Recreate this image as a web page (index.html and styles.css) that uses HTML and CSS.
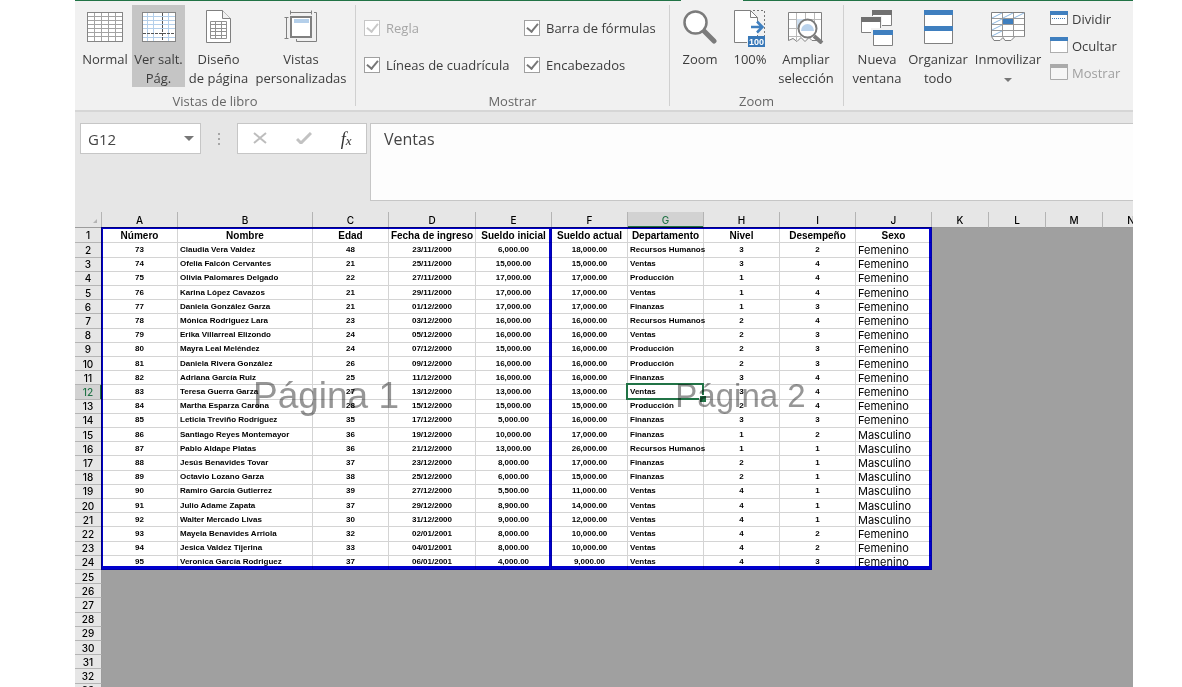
FILE: index.html
```html
<!DOCTYPE html>
<html lang="es">
<head>
  <meta charset="UTF-8" />
  <meta name="viewport" content="width=device-width, initial-scale=1.0"/>
  <title>Hoja de empleados</title>
  <link rel="stylesheet" href="styles.css">
</head>
<body>

<div class="app">
  <div class="tab-line"><span></span><span class="tab-gap"></span><span></span></div>

  <header class="ribbon">
    <section class="group">
      <div class="tools tools-views">
        <button class="tool w-normal">
          <svg width="36" height="32" viewBox="0 0 36 32">
            <rect x="0.5" y="1.5" width="35" height="29" fill="#fff" stroke="#858585"/>
            <path d="M7.5 2v28M14.5 2v28M21.5 2v28M28.5 2v28M1 5.5h34M1 9.5h34M1 13.5h34M1 17.5h34M1 21.5h34M1 25.5h34" stroke="#a3a3a3" fill="none"/>
          </svg>
          <span>Normal</span>
        </button>
        <button class="tool w-break active">
          <svg width="34" height="32" viewBox="0 0 34 32">
            <rect x="0.5" y="1.5" width="33" height="29" fill="#fff" stroke="#858585"/>
            <path d="M5.5 2v28M11.5 2v28M26.5 2v28M1 5.5h32M1 9.5h32M1 13.5h32M1 17.5h32M1 26.5h32" stroke="#b4cfea" fill="none"/>
            <path d="M20.5 2v28M1 22.5h32" stroke="#555" stroke-dasharray="3 1" fill="none"/>
          </svg>
          <span>Ver salt.<br>Pág.</span>
        </button>
        <button class="tool w-design">
          <svg width="26" height="34" viewBox="0 0 26 34">
            <path d="M.5.5h16l8 8v24H.5z" fill="#fff" stroke="#808080"/>
            <path d="M16.5.5v8h8" fill="#f1f1f1" stroke="#808080"/>
            <path d="M4.5 11.5h16v17h-16zM4.5 14.500h16M4.5 18.5h16M4.5 21.5h16M4.5 25.5h16M9.5 11.5v17M15.5 11.5v17" fill="none" stroke="#919191"/>
          </svg>
          <span>Diseño<br>de página</span>
        </button>
        <button class="tool w-custom">
          <svg width="34" height="34" viewBox="0 0 34 34">
            <path d="M6.5.5v4M27.5.5v4M7 2.5h20M.5 7.5h4M.5 28.5h4M2.5 8v20" stroke="#808080" fill="none"/>
            <path d="M30 2.5h2.5v29h-20V29" stroke="#808080" fill="none"/>
            <rect x="7" y="7" width="20" height="20" fill="#fff" stroke="#808080" stroke-width="2"/>
            <rect x="10" y="9" width="15" height="4" fill="#b4cfea"/>
          </svg>
          <span>Vistas<br>personalizadas</span>
        </button>
      </div>
      <p class="group-name">Vistas de libro</p>
    </section>

    <section class="group">
      <div class="checks">
        <label class="off"><input type="checkbox" checked disabled>Regla</label>
        <label><input type="checkbox" checked>Barra de fórmulas</label>
        <label><input type="checkbox" checked>Líneas de cuadrícula</label>
        <label><input type="checkbox" checked>Encabezados</label>
      </div>
      <p class="group-name">Mostrar</p>
    </section>

    <section class="group">
      <div class="tools tools-zoom">
        <button class="tool w-zoom">
          <svg width="34" height="34" viewBox="0 0 34 34">
            <path d="M21 21l10 10" stroke="#7b7b7b" stroke-width="5" stroke-linecap="round"/>
            <circle cx="12.5" cy="12.5" r="11" fill="#fff" stroke="#7b7b7b" stroke-width="2.5"/>
          </svg>
          <span>Zoom</span>
        </button>
        <button class="tool w-zoom">
          <svg width="32" height="38" viewBox="0 0 32 38">
            <path d="M13 32.5H.5V.5h16l7 7V26H14z" fill="#fff"/>
            <path d="M13 32.5H.5V.5h16l7 7v5M16.5.5v7h7" fill="none" stroke="#808080"/>
            <path d="M19 .5h11.5V26M23.5 21v5" fill="none" stroke="#777" stroke-dasharray="2 2"/>
            <path d="M17 17h11M23 11.5l5.500 5.500-5.500 5.500" stroke="#3f7fbf" stroke-width="2.5" fill="none"/>
            <rect x="14" y="26" width="17" height="11" fill="#3878b8"/>
            <text x="22.5" y="35" text-anchor="middle" class="tiny">100</text>
          </svg>
          <span>100%</span>
        </button>
        <button class="tool w-fit">
          <svg width="36" height="34" viewBox="0 0 36 34">
            <path d="M.5 2.5h33v28H24l-3-3-4 4-4-4-4 4-4-3-4.500 2z" fill="#fff" stroke="#808080"/>
            <path d="M8.500 3v27M17.500 3v7M26.500 3v9M1 9.500h32M1 18.500h10M1 26.500h12" stroke="#b9b9b9" fill="none"/>
            <rect x="9" y="9" width="9" height="9" fill="#cfe0f1"/>
            <path d="M26 26l8 7" stroke="#7b7b7b" stroke-width="4"/>
            <circle cx="19.5" cy="18.5" r="9" fill="#fff" stroke="#7b7b7b" stroke-width="2"/>
            <path d="M13 21a6.500 7 0 0 1 13 0z" fill="#b9d2ec"/>
          </svg>
          <span>Ampliar<br>selección</span>
        </button>
      </div>
      <p class="group-name">Zoom</p>
    </section>

    <section class="group last">
      <div class="tools tools-window">
        <button class="tool w-new">
          <svg width="33" height="38" viewBox="0 0 33 38">
            <path d="M11.5 1.5h19v14h-19z" fill="#fff" stroke="#808080"/><path d="M11 0h20v5H11z" fill="#707070"/>
            <path d="M0 6h21v18H0z" fill="#f1f1f1"/>
            <path d="M.5 8.5h19v14H.5z" fill="#fff" stroke="#808080"/><path d="M0 7h20v5H0z" fill="#707070"/>
            <path d="M10 18h22v19H10z" fill="#f1f1f1"/>
            <path d="M12.5 20.5h19v15h-19z" fill="#fff" stroke="#808080"/><path d="M12 20h20v5H12z" fill="#3f7fbf"/>
          </svg>
          <span>Nueva<br>ventana</span>
        </button>
        <button class="tool w-arrange">
          <svg width="29" height="35" viewBox="0 0 29 35">
            <path d="M.5.5h28v33H.5z" fill="#fff" stroke="#808080"/>
            <path d="M0 0h29v5H0zM0 16h29v5H0z" fill="#3f7fbf"/>
          </svg>
          <span>Organizar<br>todo</span>
        </button>
        <button class="tool w-freeze">
          <svg width="34" height="34" viewBox="0 0 34 34">
            <path d="M.5 2.5h33v24H24l-4 4h-6l-2-3-3 3H3l-2.500-4z" fill="#fff" stroke="#808080"/>
            <path d="M11.5 3v24M22.5 3v24M1 8.500h32M1 14.500h32M1 20.500h32M1 26.500h32" stroke="#999" fill="none"/>
            <path d="M1 8l10-5M12 8l10-5M23 8l10-5M1 14l10-5M1 20l10-5M1 26l10-5" stroke="#8db7e0" fill="none"/>
            <rect x="12" y="9" width="10" height="5" fill="#3f7fbf"/>
          </svg>
          <span>Inmovilizar<br><i class="arrow small"></i></span>
        </button>
        <div class="stack">
          <button>
            <svg width="18" height="15" viewBox="0 0 18 15">
              <path d="M.5.5h17v13H.5z" fill="#fff" stroke="#808080"/><path d="M0 0h18v4H0z" fill="#3f7fbf"/>
              <path d="M2 7.500h14" stroke="#3f7fbf" stroke-dasharray="1 1"/>
            </svg>Dividir
          </button>
          <button>
            <svg width="18" height="17" viewBox="0 0 18 17">
              <path d="M.5.5h17v15H.5z" fill="#fff" stroke="#666" stroke-dasharray="1 1"/><path d="M0 0h18v4H0z" fill="#3f7fbf"/>
            </svg>Ocultar
          </button>
          <button disabled>
            <svg width="18" height="17" viewBox="0 0 18 17">
              <path d="M.5.5h17v15H.5z" fill="#f6f6f6" stroke="#aaa"/><path d="M0 0h18v4H0z" fill="#aaa"/>
            </svg>Mostrar
          </button>
        </div>
      </div>
    </section>
  </header>

  <div class="formula-bar">
    <div class="name-box">
      <input type="text" value="G12" aria-label="Cuadro de nombres">
      <button aria-label="Abrir lista de nombres"><i class="arrow"></i></button>
    </div>
    <div class="dots"><i></i><i></i><i></i></div>
    <div class="fx-box">
      <button aria-label="Cancelar">
        <svg width="14" height="12" viewBox="0 0 14 12"><path d="M1 1l12 10M13 1L1 11" stroke="#bdbdbd" stroke-width="2"/></svg>
      </button>
      <button aria-label="Introducir">
        <svg width="16" height="12" viewBox="0 0 16 12"><path d="M1 7l4 4L15 1" stroke="#c2c2c2" stroke-width="3" fill="none"/></svg>
      </button>
      <button class="fx" aria-label="Insertar función">f<sub>x</sub></button>
    </div>
    <textarea aria-label="Barra de fórmulas">Ventas</textarea>
  </div>

  <main class="sheet">
    <table>
      <colgroup>
        <col class="c-num"><col class="c-std"><col class="c-name"><col class="c-std"><col class="c-date">
        <col class="c-std"><col class="c-std"><col class="c-std"><col class="c-std"><col class="c-std"><col class="c-std">
        <col class="c-out"><col class="c-out"><col class="c-out"><col class="c-out">
      </colgroup>
      <thead>
        <tr>
          <th class="corner"></th>
          <th>A</th><th>B</th><th>C</th><th>D</th><th>E</th><th>F</th><th class="current">G</th>
          <th>H</th><th>I</th><th>J</th><th>K</th><th>L</th><th>M</th><th>N</th>
        </tr>
      </thead>
      <tbody id="filas"></tbody>
    </table>
    <div class="page page-1">Página 1</div>
    <div class="page page-2">Página 2</div>
  </main>
</div>

<script>
  const titulos = ['Número', 'Nombre', 'Edad', 'Fecha de ingreso', 'Sueldo inicial', 'Sueldo actual', 'Departamento', 'Nivel', 'Desempeño', 'Sexo'];

  const empleados = [
    [73, 'Claudia Vera Valdez', 48, '23/11/2000', '6,000.00', '18,000.00', 'Recursos Humanos', 3, 2, 'Femenino'],
    [74, 'Ofelia Falcón Cervantes', 21, '25/11/2000', '15,000.00', '15,000.00', 'Ventas', 3, 4, 'Femenino'],
    [75, 'Olivia Palomares Delgado', 22, '27/11/2000', '17,000.00', '17,000.00', 'Producción', 1, 4, 'Femenino'],
    [76, 'Karina López Cavazos', 21, '29/11/2000', '17,000.00', '17,000.00', 'Ventas', 1, 4, 'Femenino'],
    [77, 'Daniela González Garza', 21, '01/12/2000', '17,000.00', '17,000.00', 'Finanzas', 1, 3, 'Femenino'],
    [78, 'Mónica Rodriguez Lara', 23, '03/12/2000', '16,000.00', '16,000.00', 'Recursos Humanos', 2, 4, 'Femenino'],
    [79, 'Erika Villarreal Elizondo', 24, '05/12/2000', '16,000.00', '16,000.00', 'Ventas', 2, 3, 'Femenino'],
    [80, 'Mayra Leal Meléndez', 24, '07/12/2000', '15,000.00', '16,000.00', 'Producción', 2, 3, 'Femenino'],
    [81, 'Daniela Rivera González', 26, '09/12/2000', '16,000.00', '16,000.00', 'Producción', 2, 3, 'Femenino'],
    [82, 'Adriana García Ruiz', 25, '11/12/2000', '16,000.00', '16,000.00', 'Finanzas', 3, 4, 'Femenino'],
    [83, 'Teresa Guerra Garza', 27, '13/12/2000', '13,000.00', '13,000.00', 'Ventas', 3, 4, 'Femenino'],
    [84, 'Martha Esparza Carona', 28, '15/12/2000', '15,000.00', '15,000.00', 'Producción', 2, 4, 'Femenino'],
    [85, 'Leticia Treviño Rodríguez', 35, '17/12/2000', '5,000.00', '16,000.00', 'Finanzas', 3, 3, 'Femenino'],
    [86, 'Santiago Reyes Montemayor', 36, '19/12/2000', '10,000.00', '17,000.00', 'Finanzas', 1, 2, 'Masculino'],
    [87, 'Pablo Aldape Platas', 36, '21/12/2000', '13,000.00', '26,000.00', 'Recursos Humanos', 1, 1, 'Masculino'],
    [88, 'Jesús Benavides Tovar', 37, '23/12/2000', '8,000.00', '17,000.00', 'Finanzas', 2, 1, 'Masculino'],
    [89, 'Octavio Lozano Garza', 38, '25/12/2000', '6,000.00', '15,000.00', 'Finanzas', 2, 1, 'Masculino'],
    [90, 'Ramiro García Gutierrez', 39, '27/12/2000', '5,500.00', '11,000.00', 'Ventas', 4, 1, 'Masculino'],
    [91, 'Julio Adame Zapata', 37, '29/12/2000', '8,900.00', '14,000.00', 'Ventas', 4, 1, 'Masculino'],
    [92, 'Walter Mercado Livas', 30, '31/12/2000', '9,000.00', '12,000.00', 'Ventas', 4, 1, 'Masculino'],
    [93, 'Mayela Benavides Arriola', 32, '02/01/2001', '8,000.00', '10,000.00', 'Ventas', 4, 2, 'Femenino'],
    [94, 'Jesica Valdez Tijerina', 33, '04/01/2001', '8,000.00', '10,000.00', 'Ventas', 4, 2, 'Femenino'],
    [95, 'Veronica García Rodriguez', 37, '06/01/2001', '4,000.00', '9,000.00', 'Ventas', 4, 3, 'Femenino']
  ];

  const filas = document.getElementById('filas');
  const clases = { 1: 'left', 6: 'left', 9: 'sex' };

  for (let n = 1; n <= 33; n++) {
    const datos = n === 1 ? titulos : empleados[n - 2];
    let html = `<th class="${n === 12 ? 'current' : ''}">${n}</th>`;
    if (datos) {
      datos.forEach((valor, i) => {
        const clase = n === 1 ? 'title' : (clases[i] || '');
        const activa = n === 12 && i === 6 ? ' selected' : '';
        html += `<td class="cell ${clase}${activa}">${valor}</td>`;
      });
      html += '<td colspan="4"></td>';
    } else {
      html += '<td colspan="14"></td>';
    }
    filas.insertAdjacentHTML('beforeend', `<tr>${html}</tr>`);
  }
</script>

</body>
</html>
```
FILE: styles.css
```css
* { box-sizing: border-box; }

body {
  margin: 0;
  background: #fff;
  font-family: 'Open Sans', 'Noto Sans', sans-serif;
  font-size: 13px;
  color: #3c3c3c;
}

button {
  font: inherit;
  color: inherit;
  background: none;
  border: 0;
  padding: 0;
}

.app {
  display: flex;
  flex-direction: column;
  height: 100vh;
  margin: 0 49px 0 75px;
  overflow: hidden;
  background: #e6e6e6;
}

/* Ribbon */
.tab-line {
  display: grid;
  grid-template-columns: 606px 62px 1fr;
  height: 1px;
  flex-shrink: 0;
}

.tab-line span { background: #217346; }
.tab-line .tab-gap { background: #f1f1f1; }

.ribbon {
  display: grid;
  grid-template-columns: 281px 314px 174px 1fr;
  height: 111px;
  flex-shrink: 0;
  padding: 4px 0;
  background: #f1f1f1;
  border-bottom: 2px solid #d6d6d6;
}

.group {
  display: flex;
  flex-direction: column;
  border-right: 1px solid #d0d0d0;
}

.group.last { border: 0; }

.group-name {
  margin: auto 0 0;
  height: 14px;
  line-height: 18px;
  text-align: center;
  color: #666;
}

.group-name, .tools, .checks { flex-shrink: 0; }

.tools { display: flex; }
.tools-views { padding-left: 3px; }
.tools-zoom { padding-left: 5px; }
.tools-window { padding-left: 3px; }

.tool {
  display: flex;
  flex-direction: column;
  align-items: center;
  flex-shrink: 0;
  height: 82px;
  padding-top: 5px;
  line-height: 19px;
  white-space: nowrap;
}

.tool svg { flex-shrink: 0; }
.tool span { margin-top: auto; height: 37px; }
.tool.active { background: #c5c5c5; }

.w-normal { width: 54px; }
.w-break { width: 53px; }
.w-normal, .w-break { padding-top: 6px; }
.w-design { width: 67px; }
.w-custom { width: 98px; }
.w-zoom { width: 50px; }
.w-fit { width: 62px; }
.w-new { width: 60px; }
.w-arrange { width: 62px; }
.w-freeze { width: 78px; }

.tiny {
  font: bold 9px 'Liberation Sans', sans-serif;
  fill: #fff;
}

.arrow {
  display: inline-block;
  border: 5px solid transparent;
  border-top-color: #777;
  border-bottom: 0;
}

.arrow.small {
  border-width: 4px 4px 0;
  vertical-align: middle;
}

.stack {
  display: flex;
  flex-direction: column;
  padding-left: 3px;
}

.stack button {
  display: flex;
  align-items: center;
  gap: 4px;
  height: 27px;
}

.stack button:disabled { color: #a0a0a0; }

.checks {
  display: grid;
  grid-template-columns: 160px 1fr;
  grid-auto-rows: 37px;
  padding: 4px 0 0 8px;
}

.checks label {
  display: flex;
  align-items: center;
  gap: 6px;
  white-space: nowrap;
}

.checks .off { color: #a6a6a6; }

.checks input {
  appearance: none;
  display: grid;
  place-items: center;
  width: 16px;
  height: 16px;
  margin: 0;
  background: #fff;
  border: 1px solid #a0a0a0;
}

.checks input:checked::after {
  content: "";
  width: 5px;
  height: 9px;
  margin-bottom: 3px;
  border: solid #777;
  border-width: 0 2px 2px 0;
  transform: rotate(40deg);
}

.checks input:disabled { border-color: #c6c6c6; }
.checks input:disabled::after { border-color: #c8c8c8; }

/* Formula bar */
.formula-bar {
  display: grid;
  grid-template-columns: 121px 36px 130px 1fr;
  align-items: start;
  flex-shrink: 0;
  height: 100px;
  padding: 11px 0 10px 5px;
}

.name-box, .fx-box {
  display: flex;
  align-items: center;
  height: 31px;
  background: #fff;
  border: 1px solid #c6c6c6;
}

.name-box input {
  flex: 1;
  min-width: 0;
  padding: 0 0 0 7px;
  border: 0;
  font: inherit;
  font-size: 15px;
  color: #444;
}

.name-box button { padding: 0 6px; }
.name-box .arrow { display: block; }

.dots {
  display: flex;
  flex-direction: column;
  align-items: center;
  justify-content: center;
  gap: 3px;
  height: 31px;
}

.dots i {
  width: 2px;
  height: 2px;
  background: #a6a6a6;
}

.fx-box { justify-content: space-around; }

.fx-box .fx {
  font: italic 18px/20px 'Liberation Serif', serif;
  color: #333;
}

.fx sub { font-size: 13px; line-height: 0; vertical-align: 0; }

.formula-bar textarea {
  display: block;
  height: 78px;
  margin-left: 3px;
  padding: 4px 13px;
  border: 1px solid #c6c6c6;
  border-right: 0;
  background: #fdfdfd;
  font: inherit;
  font-size: 16px;
  line-height: 22px;
  color: #444;
  resize: none;
}

/* Sheet */
.sheet {
  position: relative;
  flex: 1;
  overflow: hidden;
  background: #a0a0a0;
}

table {
  table-layout: fixed;
  width: 1085px;
  height: 486px;
  border-spacing: 0;
  font-family: 'Liberation Sans', Arial, sans-serif;
  color: #000;
}

.c-num { width: 27px; }
.c-std { width: 76px; }
.c-name { width: 135px; }
.c-date { width: 87px; }
.c-out { width: 57px; }

th {
  padding: 0;
  background: #e6e6e6;
  font-family: Inter, 'Liberation Sans', sans-serif;
  font-size: 10px;
  font-weight: 500;
  line-height: 12px;
}

thead th {
  height: 16px;
  border-right: 1px solid #b4b4b4;
  border-bottom: 1px solid #9c9c9c;
}

tbody th {
  border-right: 1px solid #9c9c9c;
  border-bottom: 1px solid #b4b4b4;
}

.corner { padding: 5px 4px 2px 0; }

.corner::after {
  content: "";
  display: block;
  width: 0;
  margin-left: auto;
  border: 2px solid #b4b4b4;
  border-top-color: transparent;
  border-left-color: transparent;
}

.current { background: #d2d2d2; color: #217346; }
thead .current { box-shadow: inset 0 -1px #217346; border-bottom-color: #217346; }
tbody .current { box-shadow: inset -1px 0 #217346; border-right-color: #217346; }

td { padding: 0; }

.cell {
  background: #fff;
  border-right: 1px solid #d4d4d4;
  border-bottom: 1px solid #d4d4d4;
  font-size: 8px;
  font-weight: bold;
  line-height: 12px;
  text-align: center;
  white-space: nowrap;
}

.cell.left { padding-left: 2px; text-align: left; }
.cell.title { padding-top: 1px; font-size: 10px; }

.cell.sex {
  padding-left: 2px;
  font-family: Inter, 'Liberation Sans', sans-serif;
  font-size: 11px;
  font-weight: normal;
  text-align: left;
}

.selected { position: relative; }

.selected::before {
  content: "";
  position: absolute;
  inset: -2px -1px -1px -2px;
  border: 2px solid #217346;
}

.selected::after {
  content: "";
  position: absolute;
  right: -3px;
  bottom: -3px;
  width: 6px;
  height: 6px;
  background: #217346;
  border: solid #fff;
  border-width: 1px 0 0 1px;
}

/* Print pages drawn over the cells */
.page {
  position: absolute;
  top: 15px;
  height: 343px;
  display: grid;
  place-items: center;
  padding-bottom: 3px;
  border: solid #0000cd;
  font-family: 'Liberation Sans', Arial, sans-serif;
  color: #969696;
  mix-blend-mode: multiply;
  pointer-events: none;
}

.page-1 {
  left: 26px;
  width: 451px;
  border-width: 2px 3px 4px 2px;
  font-size: 37px;
}

.page-2 {
  left: 477px;
  width: 380px;
  border-width: 2px 3px 4px 0;
  font-size: 33px;
}
```
